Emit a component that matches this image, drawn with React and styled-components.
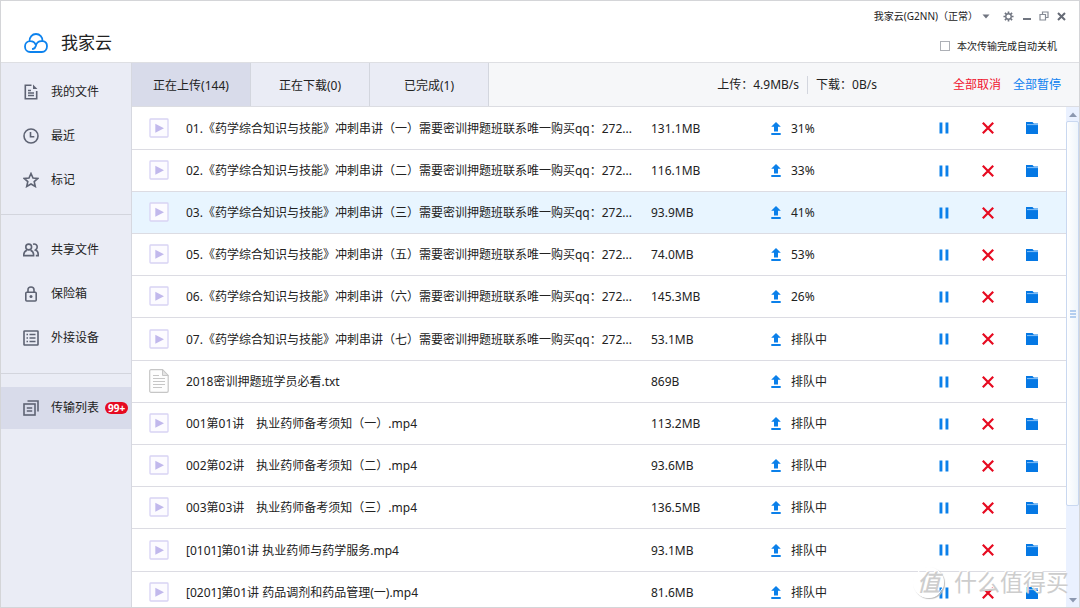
import React, { useState } from "react";
import styled, { createGlobalStyle } from "styled-components";

const uploads = [
  { name: "01.《药学综合知识与技能》冲刺串讲（一）需要密训押题班联系唯一购买qq：272...", size: "131.1MB", status: "31%" },
  { name: "02.《药学综合知识与技能》冲刺串讲（二）需要密训押题班联系唯一购买qq：272...", size: "116.1MB", status: "33%" },
  { name: "03.《药学综合知识与技能》冲刺串讲（三）需要密训押题班联系唯一购买qq：272...", size: "93.9MB", status: "41%", active: true },
  { name: "05.《药学综合知识与技能》冲刺串讲（五）需要密训押题班联系唯一购买qq：272...", size: "74.0MB", status: "53%" },
  { name: "06.《药学综合知识与技能》冲刺串讲（六）需要密训押题班联系唯一购买qq：272...", size: "145.3MB", status: "26%" },
  { name: "07.《药学综合知识与技能》冲刺串讲（七）需要密训押题班联系唯一购买qq：272...", size: "53.1MB", status: "排队中" },
  { name: "2018密训押题班学员必看.txt", size: "869B", status: "排队中", type: "txt" },
  { name: "001第01讲　执业药师备考须知（一）.mp4", size: "113.2MB", status: "排队中" },
  { name: "002第02讲　执业药师备考须知（二）.mp4", size: "93.6MB", status: "排队中" },
  { name: "003第03讲　执业药师备考须知（三）.mp4", size: "136.5MB", status: "排队中" },
  { name: "[0101]第01讲 执业药师与药学服务.mp4", size: "93.1MB", status: "排队中" },
  { name: "[0201]第01讲 药品调剂和药品管理(一).mp4", size: "81.6MB", status: "排队中" },
];

const tabs = ["正在上传(144)", "正在下载(0)", "已完成(1)"];

const menu = [
  [
    { label: "我的文件", icon: FileIcon },
    { label: "最近", icon: ClockIcon },
    { label: "标记", icon: StarIcon },
  ],
  [
    { label: "共享文件", icon: UsersIcon },
    { label: "保险箱", icon: LockIcon },
    { label: "外接设备", icon: DeviceIcon },
  ],
];

export default function App() {
  const [tab, setTab] = useState(0);
  const [shutdown, setShutdown] = useState(false);

  return (
    <>
      <GlobalStyle />
      <Window>
        <Header>
          <Brand>
            <CloudLogo />
            <BrandName>我家云</BrandName>
          </Brand>
          <HeaderRight>
            <WindowBar>
              <AccountButton>
                我家云(G2NN)（正常）
                <svg width="8" height="5" viewBox="0 0 8 5">
                  <path d="M.5 .5h7L4 4.5z" fill="#707580" />
                </svg>
              </AccountButton>
              <WindowButtons>
                <IconButton aria-label="设置"><GearIcon /></IconButton>
                <IconButton aria-label="最小化"><MinimizeIcon /></IconButton>
                <IconButton aria-label="还原"><RestoreIcon /></IconButton>
                <IconButton aria-label="关闭"><CloseIcon /></IconButton>
              </WindowButtons>
            </WindowBar>
            <ShutdownLabel>
              <Checkbox
                type="checkbox"
                checked={shutdown}
                onChange={(e) => setShutdown(e.target.checked)}
              />
              本次传输完成自动关机
            </ShutdownLabel>
          </HeaderRight>
        </Header>
        <Body>
          <Sidebar>
            {menu.map((group, i) => (
              <MenuGroup key={i}>
                {group.map(({ label, icon: Icon }) => (
                  <MenuItem href="#" key={label}>
                    <Icon />
                    {label}
                  </MenuItem>
                ))}
              </MenuGroup>
            ))}
            <MenuItem href="#" $active>
              <TransferIcon />
              传输列表
              <Badge>99+</Badge>
            </MenuItem>
          </Sidebar>
          <Main>
            <Toolbar>
              <Tabs>
                {tabs.map((t, i) => (
                  <Tab key={t} $active={i === tab} onClick={() => setTab(i)}>
                    {t}
                  </Tab>
                ))}
              </Tabs>
              <Speeds>
                <Speed>上传：4.9MB/s</Speed>
                <Speed>下载：0B/s</Speed>
              </Speeds>
              <TextButton $color="#f0142f">全部取消</TextButton>
              <TextButton $color="#0b80f0">全部暂停</TextButton>
            </Toolbar>
            <ListArea>
              <Table>
                <colgroup>
                  <Col $width={54} />
                  <Col />
                  <Col $width={120} />
                  <Col $width={151} />
                  <Col $width={44} />
                  <Col $width={44} />
                  <Col $width={44} />
                  <Col $width={12} />
                </colgroup>
                <tbody>
                  {uploads.map((file) => (
                    <Row key={file.name} $active={file.active}>
                      <IconCell>{file.type === "txt" ? <TextFileIcon /> : <VideoIcon />}</IconCell>
                      <Cell>{file.name}</Cell>
                      <Cell>{file.size}</Cell>
                      <Cell>
                        <Status>
                          <UploadIcon />
                          {file.status}
                        </Status>
                      </Cell>
                      <IconCell>
                        <IconButton aria-label="暂停"><PauseIcon /></IconButton>
                      </IconCell>
                      <IconCell>
                        <IconButton aria-label="取消"><CancelIcon /></IconButton>
                      </IconCell>
                      <IconCell>
                        <IconButton aria-label="打开文件夹"><FolderIcon /></IconButton>
                      </IconCell>
                      <Cell />
                    </Row>
                  ))}
                </tbody>
              </Table>
              <Scrollbar>
                <ScrollArrow>
                  <svg width="8" height="5" viewBox="0 0 8 5">
                    <path d="M0 5l4-4.500L8 5z" fill="#8c98b0" />
                  </svg>
                </ScrollArrow>
                <ScrollThumb>
                  <svg width="6" height="8" viewBox="0 0 6 8">
                    <path d="M0 1h6M0 4h6M0 7h6" stroke="#9fc0ea" strokeWidth="1.4" />
                  </svg>
                </ScrollThumb>
                <ScrollArrow>
                  <svg width="8" height="5" viewBox="0 0 8 5">
                    <path d="M0 0l4 4.500L8 0z" fill="#8c98b0" />
                  </svg>
                </ScrollArrow>
              </Scrollbar>
            </ListArea>
          </Main>
        </Body>
        <Watermark>
          <WatermarkLogo>值</WatermarkLogo>
          什么值得买
        </Watermark>
      </Window>
    </>
  );
}

function CloudLogo() {
  return (
    <svg width="24" height="20" viewBox="0 0 24 20" fill="none" stroke="#0c82ee" strokeWidth="1.8" strokeLinecap="round">
      <path d="M5.500 8.200C5.300 4 8.200 1 12 1s6.900 3 6.500 7.100C21.300 8.300 23 10.600 23 13.300 23 16.600 20.700 19 17.800 19H6.200C3.200 19 1 16.600 1 13.500S3.300 8.100 6.200 8.100c2.600 0 4.600 1.400 5.300 3.400" />
      <path d="M18.500 8.100c-4.700-.4-6.300 2.700-6.700 4.900-.4 1.900-1.600 2.700-3 3" />
    </svg>
  );
}

function FileIcon() {
  return (
    <SideSvg viewBox="0 0 16 16">
      <path d="M8.500 1.300H2.300v13.400h11.400V7" />
      <path d="M5 6.500h3M5 9h6M5 11.500h6" strokeWidth="1.400" />
      <path d="M10 .6L14.400 5H10z" fill="#5e6373" stroke="none" />
    </SideSvg>
  );
}

function ClockIcon() {
  return (
    <SideSvg viewBox="0 0 16 16">
      <circle cx="8" cy="8" r="7" />
      <path d="M7.500 4v4.800h3.800" />
    </SideSvg>
  );
}

function StarIcon() {
  return (
    <SideSvg viewBox="0 0 16 16">
      <path d="M8 1.500l2 4.500 4.800.4-3.600 3.200 1.100 4.900L8 12l-4.300 2.500 1.100-4.900L1.200 6.400 6 6z" />
    </SideSvg>
  );
}

function UsersIcon() {
  return (
    <SideSvg viewBox="0 0 16 16">
      <circle cx="5.700" cy="5" r="2.900" />
      <path d="M3.900 8.200C1.900 9 .8 10.600.8 12.600v1h9.800v-1c0-2-1.100-3.600-3.100-4.400M10 2.200c2.800-.6 4.200.9 4.200 2.800 0 1.200-.6 2.300-1.700 3 1.900.8 2.700 2.300 2.700 4.200v1.400h-2.400" />
    </SideSvg>
  );
}

function LockIcon() {
  return (
    <SideSvg viewBox="0 0 16 16">
      <rect x="2.800" y="6.300" width="10.400" height="8.700" rx="1" />
      <path d="M5 6V3.700C5 2 6.200 1 8 1s3 1 3 2.700V6" />
      <circle cx="8" cy="10.600" r="1.500" fill="#5e6373" stroke="none" />
    </SideSvg>
  );
}

function DeviceIcon() {
  return (
    <SideSvg viewBox="0 0 16 16">
      <rect x="1" y="1" width="14" height="14" rx=".6" />
      <path d="M3.500 4.500H5M3.500 8H5M3.500 11.500H5M6.500 4.500h6M6.500 8h6M6.500 11.500h6" />
    </SideSvg>
  );
}

function TransferIcon() {
  return (
    <SideSvg viewBox="0 0 16 16">
      <rect x="1" y="4" width="11" height="11" />
      <path d="M4.500 1H15v10.500M3.800 8h5.400M3.800 11h5.400" />
    </SideSvg>
  );
}

function GearIcon() {
  return (
    <svg width="11" height="11" viewBox="0 0 12 12" fill="none" stroke="#707580">
      <circle cx="6" cy="6" r="3" strokeWidth="1.500" />
      <path d="M6 .5v2M6 9.500v2M.5 6h2M9.500 6h2M2.100 2.100l1.400 1.400M8.500 8.500l1.400 1.400M2.100 9.900l1.400-1.400M8.500 3.500l1.400-1.400" strokeWidth="1.800" />
    </svg>
  );
}

function MinimizeIcon() {
  return (
    <svg width="9" height="10" viewBox="0 0 9 10">
      <path d="M1 8h8" stroke="#707580" strokeWidth="2" />
    </svg>
  );
}

function RestoreIcon() {
  return (
    <svg width="10" height="10" viewBox="0 0 10 10" fill="none" stroke="#868b95">
      <path d="M1 3.500h5.500V9H1zM3.500 3.500V1H9v5.500H6.500" strokeWidth="1.200" />
    </svg>
  );
}

function CloseIcon() {
  return (
    <svg width="9" height="9" viewBox="0 0 9 9">
      <path d="M1 1l7 7M8 1L1 8" stroke="#656a75" strokeWidth="2" />
    </svg>
  );
}

function VideoIcon() {
  return (
    <svg width="20" height="20" viewBox="0 0 20 20">
      <rect x="1" y="1" width="18" height="18" rx=".8" fill="#fcfbff" stroke="#d8d3f4" strokeWidth="1.300" />
      <path d="M6.300 5.700v9l8.700-4.500z" fill="#c1b8ec" />
    </svg>
  );
}

function TextFileIcon() {
  return (
    <svg width="20" height="24" viewBox="0 0 20 24" fill="none" stroke="#c6c6c6">
      <path d="M2 .7h11.500l5.700 5.800V22c0 .8-.5 1.300-1.300 1.300H2C1.200 23.300.7 22.800.7 22V2C.7 1.200 1.200.7 2 .7z" fill="#fdfdfd" strokeWidth="1.200" />
      <path d="M13.500.7v5.800h5.700z" fill="#e5e5e5" />
      <path d="M4 6.500h6M4 9.500h12M4 12.500h12M4 15.500h12M4 18.500h9" />
    </svg>
  );
}

function UploadIcon() {
  return (
    <svg width="10" height="14" viewBox="0 0 10 14" fill="#0b80ea">
      <path d="M5 0l4.800 4.800H7v4.700H3V4.800H.2zM.3 11h9.400v2H.3z" />
    </svg>
  );
}

function PauseIcon() {
  return (
    <svg width="10" height="12" viewBox="0 0 10 12" fill="#0b80ea">
      <path d="M.5 .5h2.900v11H.5zM6.500 .5h2.900v11H6.500z" />
    </svg>
  );
}

function CancelIcon() {
  return (
    <svg width="12" height="12" viewBox="0 0 12 12">
      <path d="M.8 .8l10.400 10.400M11.200 .8L.8 11.200" stroke="#e60a20" strokeWidth="2.200" />
    </svg>
  );
}

function FolderIcon() {
  return (
    <svg width="12" height="12" viewBox="0 0 12 12">
      <path d="M0 0h6.500l1.300 1.500H12V12H0z" fill="#0578e4" />
      <path d="M1 2.600h11" stroke="#a9d3fa" strokeWidth=".8" />
    </svg>
  );
}

const GlobalStyle = createGlobalStyle`
  * {
    box-sizing: border-box;
  }
  body {
    margin: 0;
    color: #222;
    background: #fff;
    font: 12px/18px "Noto Sans", "Noto Sans CJK SC", sans-serif;
  }
  button {
    padding: 0;
    border: 0;
    background: none;
    color: inherit;
    font: inherit;
    cursor: pointer;
  }
  svg {
    display: block;
    flex: none;
  }
`;
const Window = styled.div`
  position: relative;
  display: flex;
  flex-direction: column;
  height: 100vh;
  border: 1px solid #d4d5d8;
  overflow: hidden;
`;
const Header = styled.header`
  display: flex;
  justify-content: space-between;
  flex: none;
  height: 62px;
  padding: 6px 13px 0 23px;
  border-bottom: 1px solid #dedfe3;
`;
const Brand = styled.div`
  display: flex;
  align-items: center;
  gap: 13px;
  padding-top: 16px;
`;
const BrandName = styled.h1`
  margin: 0;
  font-size: 17px;
  font-weight: 400;
  line-height: 24px;
`;
const HeaderRight = styled.div`
  display: flex;
  flex-direction: column;
  align-items: flex-end;
  gap: 12px;
  font-size: 10px;
`;
const WindowBar = styled.div`
  display: flex;
  align-items: center;
  gap: 13px;
`;
const AccountButton = styled.button`
  display: flex;
  align-items: center;
  gap: 4px;
`;
const WindowButtons = styled.div`
  display: flex;
  align-items: center;
  gap: 8px;
`;
const IconButton = styled.button`
  display: inline-flex;
  vertical-align: middle;
`;
const ShutdownLabel = styled.label`
  display: flex;
  align-items: center;
  gap: 7px;
  padding-right: 9px;
`;
const Checkbox = styled.input`
  appearance: none;
  width: 10px;
  height: 10px;
  margin: 0;
  border: 1px solid #adb0b6;
  background: #fff;
  &:checked {
    background: #0b80ea;
  }
`;
const Body = styled.div`
  display: flex;
  flex: 1;
  min-height: 0;
`;
const Sidebar = styled.nav`
  flex: none;
  width: 131px;
  border-right: 1px solid #d6d8e0;
  background: #eaecf5;
`;
const MenuGroup = styled.div`
  display: flex;
  flex-direction: column;
  gap: 2px;
  margin-bottom: 13px;
  padding: 1px 0 14px;
  border-bottom: 1px solid #d3d5dd;
  &:first-child {
    padding: 8px 0 13px;
  }
`;
const MenuItem = styled.a`
  display: flex;
  align-items: center;
  height: 42px;
  padding: 0 0 0 22px;
  color: #222;
  text-decoration: none;
  line-height: 20px;
  background: ${(props) => (props.$active ? "#d8dbea" : "transparent")};
`;
const SideSvg = styled.svg`
  width: 16px;
  height: 16px;
  margin-right: 12px;
  fill: none;
  stroke: #5e6373;
  stroke-width: 1.6;
`;
const Badge = styled.span`
  margin-left: 6px;
  padding: 0 3px;
  border-radius: 6px;
  background: #e60a20;
  color: #fff;
  font-size: 10px;
  font-weight: 700;
  line-height: 12px;
`;
const Main = styled.main`
  display: flex;
  flex-direction: column;
  flex: 1;
  min-width: 0;
`;
const Toolbar = styled.div`
  display: flex;
  align-items: center;
  flex: none;
  height: 44px;
  padding-right: 18px;
  border-bottom: 1px solid #dcdde2;
  background: #f6f7f9;
`;
const Tabs = styled.div`
  display: flex;
  align-self: stretch;
`;
const Tab = styled.button`
  width: 119px;
  padding-top: 2px;
  border-right: 1px solid #d3d6de;
  background: ${(props) => (props.$active ? "#d8dbea" : "#eaecf5")};
`;
const Speeds = styled.div`
  display: flex;
  margin-left: auto;
  margin-right: 56px;
`;
const Speed = styled.span`
  padding: 0 8px;
  & + & {
    border-left: 1px solid #d3d6de;
  }
`;
const TextButton = styled.button`
  margin-left: 12px;
  color: ${(props) => props.$color};
`;
const ListArea = styled.div`
  display: flex;
  flex: 1;
  min-height: 0;
  align-items: flex-start;
`;
const Table = styled.table`
  flex: 1;
  min-width: 0;
  table-layout: fixed;
  border-collapse: separate;
  border-spacing: 0;
`;
const Col = styled.col`
  width: ${(props) => (props.$width ? `${props.$width}px` : "auto")};
`;
const Row = styled.tr`
  height: 42px;
  background: ${(props) => (props.$active ? "#e8f5ff" : "#fff")};
  &:nth-child(5n + 1) {
    height: 43px;
  }
`;
const Cell = styled.td`
  padding: 1px 0 0;
  border-bottom: 1px solid #dcdce3;
  white-space: nowrap;
  overflow: hidden;
  text-overflow: ellipsis;
`;
const IconCell = styled(Cell)`
  padding: 0 0 1px;
  text-align: center;
  svg {
    margin: 0 auto;
  }
`;
const Status = styled.div`
  display: flex;
  align-items: center;
  gap: 10px;
`;
const Scrollbar = styled.div`
  display: flex;
  flex-direction: column;
  align-self: stretch;
  flex: none;
  width: 13px;
  background: #eaf1ff;
`;
const ScrollArrow = styled.div`
  display: flex;
  align-items: center;
  justify-content: center;
  height: 14px;
`;
const ScrollThumb = styled.div`
  display: flex;
  align-items: center;
  justify-content: center;
  height: 77%;
  margin-bottom: auto;
  border: 1px solid #c9d8f0;
  border-radius: 2px;
  background: linear-gradient(to right, #fff, #eef5fb);
`;
const Watermark = styled.div`
  position: absolute;
  right: 10px;
  bottom: 9px;
  display: flex;
  align-items: center;
  gap: 10px;
  color: #cdcdcd;
  font-size: 23px;
  line-height: 32px;
  text-shadow: -1px -1px 0 #fff;
  pointer-events: none;
`;
const WatermarkLogo = styled.span`
  width: 31px;
  height: 31px;
  border: 1px solid #fff;
  border-radius: 50%;
  box-shadow: 1px 1px 1px #bbb;
  font-style: italic;
  font-weight: 500;
  line-height: 28px;
  text-align: center;
`;
